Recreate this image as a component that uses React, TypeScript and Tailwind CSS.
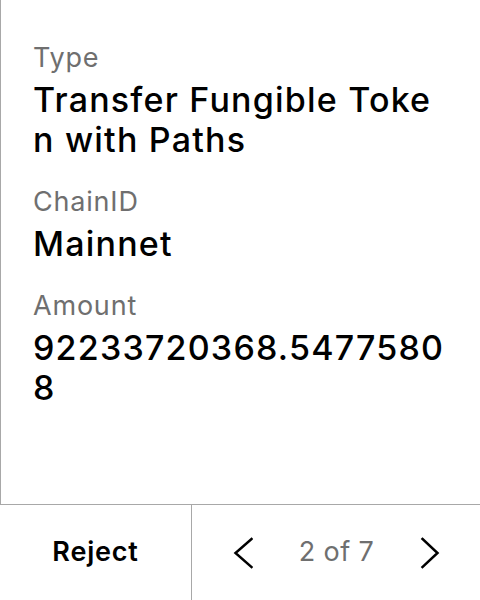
import React from "react";

function Field({ label, lines }: { label: string; lines: string[] }) {
  return (
    <div className="flex flex-col gap-[6px]">
      <div className="pt-[2px] text-[27px] leading-[32px] tracking-[0.8px] text-[#6f6f6f]">{label}</div>
      <div className="text-[34px] leading-[40px] font-medium tracking-[1.2px] text-black whitespace-nowrap">
        {lines.map((l, i) => (
          <div key={i}>{l}</div>
        ))}
      </div>
    </div>
  );
}

export default function App() {
  return (
    <div className="w-[480px] h-[600px] bg-white flex flex-col font-[family-name:Inter,sans-serif] overflow-hidden">
      <div className="flex-1 border-l border-[#a8a8a8] pl-[32px] pt-[40px] flex flex-col gap-6">
        <Field label="Type" lines={["Transfer Fungible Toke", "n with Paths"]} />
        <Field label="ChainID" lines={["Mainnet"]} />
        <Field label="Amount" lines={["92233720368.5477580", "8"]} />
      </div>
      <div className="h-[96px] border-t border-[#a8a8a8] flex">
        <div className="w-[192px] border-r border-[#a8a8a8] flex items-center justify-center text-[27px] font-semibold tracking-[0.8px] text-black">
          Reject
        </div>
        <div className="flex-1 flex items-center pl-[41px] pr-[40px]">
          <svg width="20" height="32" viewBox="0 0 20 32" fill="none">
            <path d="M18.5 2 L2.5 16 L18.5 30" stroke="black" strokeWidth="2.5" strokeLinecap="square" strokeLinejoin="miter" />
          </svg>
          <div className="flex-1 text-center text-[27px] tracking-[0.4px] text-[#6f6f6f]">2 of 7</div>
          <svg width="20" height="32" viewBox="0 0 20 32" fill="none">
            <path d="M2.5 2 L17.5 16 L2.5 30" stroke="black" strokeWidth="2.5" strokeLinecap="square" strokeLinejoin="miter" />
          </svg>
        </div>
      </div>
    </div>
  );
}
